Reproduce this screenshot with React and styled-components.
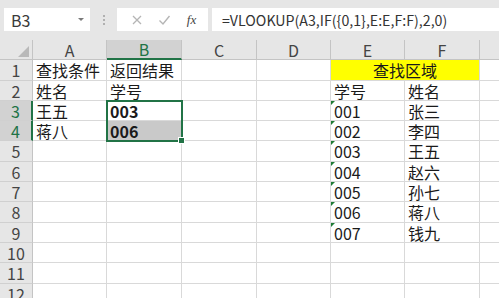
import React from 'react';
import styled, { createGlobalStyle } from 'styled-components';

const GlobalStyle = createGlobalStyle`
  html, body {
    margin: 0;
    padding: 0;
    background: #ffffff;
    overflow: hidden;
  }
  body {
    font-family: "Noto Sans CJK SC", "Noto Sans", sans-serif;
  }
`;

const GREEN = '#217346';

const Window = styled.div`
  width: 499px;
  height: 298px;
  overflow: hidden;
  background: #ffffff;
`;

const TopBar = styled.div`
  height: 40px;
  background: #e6e6e6;
  display: flex;
  align-items: flex-start;
  padding: 8px 0 0 4px;
  box-sizing: border-box;
`;

const NameBox = styled.div`
  width: 86px;
  height: 23px;
  background: #fff;
  display: flex;
  align-items: center;
  justify-content: space-between;
  padding: 0 6px 0 7px;
  box-sizing: border-box;
  font-size: 16px;
  line-height: 18px;
  color: #3a3a3a;
`;

const DropArrow = styled.span`
  width: 0;
  height: 0;
  border-left: 3px solid transparent;
  border-right: 3px solid transparent;
  border-top: 3px solid #7a7a7a;
`;

const Dots = styled.div`
  width: 27px;
  height: 23px;
  display: flex;
  flex-direction: column;
  align-items: center;
  justify-content: center;
  gap: 2px;

  span {
    width: 2px;
    height: 2px;
    background: #b0b0b0;
  }
`;

const FxBox = styled.div`
  width: 91px;
  height: 23px;
  background: #fff;
  display: flex;
  align-items: center;
  justify-content: space-around;
  padding: 0 4px 0 6px;
  box-sizing: border-box;
`;

const Fx = styled.span`
  font-family: "Liberation Serif", serif;
  font-style: italic;
  font-size: 13px;
  line-height: 14px;
  color: #444;
`;

const FormulaInput = styled.div`
  margin-left: 4px;
  flex: 1;
  height: 23px;
  background: #fff;
  display: flex;
  align-items: center;
  padding-left: 10px;
  font-size: 14.2px;
  line-height: 18px;
  color: #333;
  white-space: nowrap;
`;

const Sheet = styled.div`
  position: relative;
  display: grid;
  grid-template-columns: 33px 74px 75px 75px 74px 74px 75px 80px;
  grid-auto-rows: min-content;
`;

const Corner = styled.div`
  height: 20px;
  background: #e6e6e6;
  border-right: 1px solid #c4c4c4;
  border-bottom: 1px solid #c4c4c4;
  box-sizing: border-box;
  position: relative;

  &::after {
    content: '';
    position: absolute;
    right: 3px;
    bottom: 2px;
    width: 0;
    height: 0;
    border-left: 11px solid transparent;
    border-bottom: 11px solid #b9b9b9;
  }
`;

const ColHead = styled.div`
  height: 20px;
  background: ${(p) => (p.$active ? '#d2d2d2' : '#e6e6e6')};
  color: ${(p) => (p.$active ? GREEN : '#444')};
  border-right: 1px solid #c4c4c4;
  border-bottom: ${(p) => (p.$active ? `2px solid ${GREEN}` : '1px solid #c4c4c4')};
  box-sizing: border-box;
  display: flex;
  align-items: center;
  justify-content: center;
  font-size: 16px;
  line-height: 18px;
`;

const RowHead = styled.div`
  height: ${(p) => p.$h}px;
  background: ${(p) => (p.$active ? '#d2d2d2' : '#e6e6e6')};
  color: ${(p) => (p.$active ? GREEN : '#444')};
  border-right: ${(p) => (p.$active ? `2px solid ${GREEN}` : '1px solid #c4c4c4')};
  border-bottom: 1px solid #d0d0d0;
  box-sizing: border-box;
  display: flex;
  align-items: center;
  justify-content: center;
  font-size: 16px;
  line-height: 18px;
`;

const Cell = styled.div`
  position: relative;
  height: ${(p) => p.$h}px;
  grid-column: ${(p) => (p.$span ? `span ${p.$span}` : 'auto')};
  background: ${(p) => p.$bg || '#fff'};
  border-right: 1px solid #d9d9d9;
  border-bottom: 1px solid #d9d9d9;
  box-sizing: border-box;
  display: flex;
  align-items: center;
  justify-content: ${(p) => (p.$center ? 'center' : 'flex-start')};
  padding-left: ${(p) => (p.$center ? 0 : 3)}px;
  font-size: 16px;
  line-height: 18px;
  font-weight: ${(p) => (p.$bold ? 700 : 400)};
  color: #1a1a1a;
  white-space: nowrap;
`;

const TextFlag = styled.span`
  position: absolute;
  top: 0;
  left: 0;
  width: 0;
  height: 0;
  border-right: 4px solid transparent;
  border-top: 4px solid #1e7b34;
`;

const Selection = styled.div`
  position: absolute;
  left: 106px;
  top: 60px;
  width: 77px;
  height: 42px;
  border: 2px solid ${GREEN};
  box-sizing: border-box;
  pointer-events: none;

  &::after {
    content: '';
    position: absolute;
    right: -4px;
    bottom: -4px;
    width: 5px;
    height: 5px;
    background: ${GREEN};
    border: 1px solid #fff;
  }
`;

const cols = ['A', 'B', 'C', 'D', 'E', 'F', 'G'];

const rows = [
  { n: 1, h: 21, A: '查找条件', B: '返回结果', title: '查找区域' },
  { n: 2, h: 20, A: '姓名', B: '学号', E: '学号', F: '姓名' },
  { n: 3, h: 20, A: '王五', B: '003', E: '001', F: '张三', active: true },
  { n: 4, h: 20, A: '蒋八', B: '006', E: '002', F: '李四', active: true, shade: true },
  { n: 5, h: 21, E: '003', F: '王五' },
  { n: 6, h: 20, E: '004', F: '赵六' },
  { n: 7, h: 20, E: '005', F: '孙七' },
  { n: 8, h: 21, E: '006', F: '蒋八' },
  { n: 9, h: 20, E: '007', F: '钱九' },
  { n: 10, h: 20 },
  { n: 11, h: 21 },
  { n: 12, h: 20 },
];

const renderRow = (r) => {
  const out = [
    <RowHead key={`h${r.n}`} $h={r.h} $active={r.active}>
      {r.n}
    </RowHead>,
  ];
  cols.forEach((c) => {
    if (r.title && c === 'E') {
      out.push(
        <Cell key={`${c}${r.n}`} $h={r.h} $span={2} $bg="#ffff00" $center>
          {r.title}
        </Cell>
      );
      return;
    }
    if (r.title && c === 'F') return;
    const numeric = /^\d+$/.test(r[c] || '');
    out.push(
      <Cell
        key={`${c}${r.n}`}
        $h={r.h}
        $bold={c === 'B' && numeric}
        $bg={c === 'B' && r.shade ? '#c9c9c9' : undefined}
      >
        {c === 'E' && numeric && <TextFlag />}
        {r[c]}
      </Cell>
    );
  });
  return out;
};

export default function App() {
  return (
    <Window>
      <GlobalStyle />
      <TopBar>
        <NameBox>
          B3
          <DropArrow />
        </NameBox>
        <Dots>
          <span />
          <span />
          <span />
        </Dots>
        <FxBox>
          <svg width="12" height="12" viewBox="0 0 12 12">
            <path d="M2 2 L10 10 M10 2 L2 10" stroke="#b5b5b5" strokeWidth="1.3" fill="none" />
          </svg>
          <svg width="13" height="12" viewBox="0 0 13 12">
            <path d="M1.5 6.5 L5 10 L11.5 2" stroke="#b5b5b5" strokeWidth="1.4" fill="none" />
          </svg>
          <Fx>fx</Fx>
        </FxBox>
        <FormulaInput>=VLOOKUP(A3,IF({'{'}0,1{'}'},E:E,F:F),2,0)</FormulaInput>
      </TopBar>
      <Sheet>
        <Corner />
        {cols.map((c) => (
          <ColHead key={c} $active={c === 'B'}>
            {c}
          </ColHead>
        ))}
        {rows.map(renderRow)}
        <Selection />
      </Sheet>
    </Window>
  );
}
